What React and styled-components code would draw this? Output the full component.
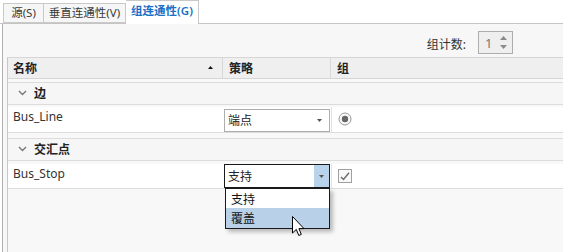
import React from "react";
import styled, { createGlobalStyle } from "styled-components";

const GlobalStyle = createGlobalStyle`
  html, body { margin: 0; padding: 0; background: #fff; }
  body {
    font-family: "Noto Sans", "Noto Sans CJK SC", sans-serif;
    font-size: 12px;
    color: #333;
  }
  * { box-sizing: border-box; }
`;

const Window = styled.div`
  width: 563px;
  height: 252px;
  position: relative;
  overflow: hidden;
  display: flex;
  flex-direction: column;
  background: #fff;
`;

const TabBar = styled.div`
  height: 24px;
  flex: none;
  display: flex;
  align-items: flex-end;
  padding-left: 3px;
  border-bottom: 1px solid #c4c4c4;
`;

const Tab = styled.div`
  width: ${(p) => p.$w}px;
  height: ${(p) => (p.$active ? "24px" : "20px")};
  margin-bottom: ${(p) => (p.$active ? "-1px" : "0")};
  display: flex;
  align-items: center;
  justify-content: center;
  padding-bottom: ${(p) => (p.$active ? "3px" : "0")};
  border: 1px solid #c9c9c9;
  border-left: ${(p) => (p.$first ? "1px solid #c9c9c9" : "none")};
  border-bottom: ${(p) => (p.$active ? "none" : "1px solid #c9c9c9")};
  background: ${(p) => (p.$active ? "#fff" : "#f6f6f6")};
  color: ${(p) => (p.$active ? "#1a70c4" : "#3a3a3a")};
  font-weight: ${(p) => (p.$active ? 600 : 400)};
  font-size: 11.5px;
  white-space: nowrap;
  line-height: 1;
`;

const Panel = styled.div`
  flex: 1;
  margin-left: 2px;
  border-left: 1px solid #b0b0b0;
  background: #f7f7f7;
  padding-left: 4px;
  display: flex;
  flex-direction: column;
`;

const Toolbar = styled.div`
  height: 33px;
  flex: none;
  display: flex;
  justify-content: flex-end;
  align-items: flex-start;
  padding: 7px 50px 0 0;
  gap: 12px;
`;

const CountLabel = styled.span`
  margin-top: 4px;
  color: #333;
`;

const Spinner = styled.div`
  width: 35px;
  height: 23px;
  border: 1px solid #adadad;
  background: #efefef;
  display: flex;
  align-items: center;
  justify-content: space-between;
  padding: 0 5px 0 6px;
  color: #777;
  font-size: 13px;
`;

const SpinArrows = styled.div`
  display: flex;
  flex-direction: column;
  gap: 5px;
`;

const Grid = styled.div`
  flex: 1;
  border-top: 1px solid #d6d6d6;
  border-left: 1px solid #c8c8c8;
  background: #f8f8f8;
  display: flex;
  flex-direction: column;
  position: relative;
`;

const Row = styled.div`
  display: grid;
  grid-template-columns: 215px 108px 1fr;
`;

const HeaderRow = styled(Row)`
  height: 21px;
  background: #efefef;
  border-bottom: 1px solid #d6d6d6;
  color: #222;
  font-weight: 600;
`;

const HeaderCell = styled.div`
  display: flex;
  align-items: center;
  justify-content: space-between;
  padding: 0 9px 1px ${(p) => p.$pl || 5}px;
  border-right: ${(p) => (p.$last ? "none" : "1px solid #d8d8d8")};
`;

const GroupRow = styled.div`
  margin-top: ${(p) => p.$gap}px;
  height: 23px;
  border-top: 1px solid #dcdcdc;
  border-bottom: 1px solid #dcdcdc;
  background: #f6f6f6;
  display: flex;
  align-items: center;
  gap: 7px;
  padding: 0 0 1px 10px;
  font-weight: 600;
  color: #222;
`;

const DataRow = styled(Row)`
  margin-top: ${(p) => p.$gap}px;
  height: ${(p) => p.$h}px;
  background: #fff;
  border-bottom: 1px solid #dcdcdc;
`;

const NameCell = styled.div`
  padding: 1px 0 0 5px;
  color: #333;
`;

const PolicyCell = styled.div`
  padding: ${(p) => p.$pt}px 0 0 1px;
  position: relative;
`;

const ValueCell = styled.div`
  border-left: 1px solid #e2e2e2;
  display: flex;
  align-items: ${(p) => (p.$top ? "flex-start" : "center")};
  padding: ${(p) => (p.$top ? "5px 0 0 6px" : "0 0 2px 6px")};
`;

const Combo = styled.div`
  width: 106px;
  height: ${(p) => (p.$open ? 24 : 23)}px;
  border: 1px solid ${(p) => (p.$open ? "#1a1a1a" : "#adadad")};
  background: #fff;
  display: flex;
  align-items: center;
  color: #222;
`;

const ComboText = styled.span`
  flex: 1;
  padding-left: 3px;
  padding-bottom: 1px;
`;

const ComboButton = styled.div`
  width: 15px;
  align-self: stretch;
  display: flex;
  align-items: center;
  justify-content: center;
  background: ${(p) => (p.$open ? "#b9d3ea" : "transparent")};
  margin-right: ${(p) => (p.$open ? 0 : 2)}px;
`;

const DropList = styled.div`
  position: absolute;
  left: 2px;
  top: 24px;
  width: 105px;
  border: 1px solid #1a1a1a;
  background: #fff;
  box-shadow: 3px 3px 4px rgba(0, 0, 0, 0.25);
  z-index: 2;
`;

const DropItem = styled.div`
  height: ${(p) => (p.$h ? p.$h : 19)}px;
  padding-left: 5px;
  display: flex;
  align-items: center;
  background: ${(p) => (p.$selected ? "#b9d1e8" : "#fff")};
  color: #111;
`;

const Check = styled.div`
  width: 14px;
  height: 14px;
  border: 1px solid #a0a0a0;
  background: #f8f8f8;
  display: flex;
  align-items: center;
  justify-content: center;
`;

const Cursor = styled.svg`
  position: absolute;
  left: 292px;
  top: 216px;
  z-index: 3;
`;

const Tri = ({ up, color = "#666", w = 6, h = 3 }) => (
  <svg width={w} height={h} viewBox={`0 0 ${w} ${h}`}>
    <polygon
      points={up ? `0,${h} ${w},${h} ${w / 2},0` : `0,0 ${w},0 ${w / 2},${h}`}
      fill={color}
    />
  </svg>
);

const Chevron = () => (
  <svg width="9" height="6" viewBox="0 0 9 6">
    <polyline points="1,1 4.5,4.5 8,1" fill="none" stroke="#777" strokeWidth="1.4" />
  </svg>
);

const Radio = () => (
  <svg width="14" height="14" viewBox="0 0 14 14">
    <circle cx="7" cy="7" r="6" fill="#f8f8f8" stroke="#9a9a9a" strokeWidth="1" />
    <circle cx="7" cy="7" r="3.2" fill="#666" />
  </svg>
);

export default function App() {
  return (
    <>
      <GlobalStyle />
      <Window>
        <TabBar>
          <Tab $w={41} $first>源(S)</Tab>
          <Tab $w={82}>垂直连通性(V)</Tab>
          <Tab $w={73} $active>组连通性(G)</Tab>
        </TabBar>
        <Panel>
          <Toolbar>
            <CountLabel>组计数:</CountLabel>
            <Spinner>
              <span>1</span>
              <SpinArrows>
                <Tri up color="#8a8a8a" w={7} h={4} />
                <Tri color="#8a8a8a" w={7} h={4} />
              </SpinArrows>
            </Spinner>
          </Toolbar>
          <Grid>
            <HeaderRow>
              <HeaderCell>
                <span>名称</span>
                <Tri up color="#111" w={5} h={3} />
              </HeaderCell>
              <HeaderCell $pl={6}>策略</HeaderCell>
              <HeaderCell $pl={6} $last>组</HeaderCell>
            </HeaderRow>

            <GroupRow $gap={3}>
              <Chevron />
              <span>边</span>
            </GroupRow>
            <DataRow $gap={2} $h={26}>
              <NameCell>Bus_Line</NameCell>
              <PolicyCell $pt={2}>
                <Combo>
                  <ComboText>端点</ComboText>
                  <ComboButton>
                    <Tri color="#555" w={5} h={3} />
                  </ComboButton>
                </Combo>
              </PolicyCell>
              <ValueCell>
                <Radio />
              </ValueCell>
            </DataRow>

            <GroupRow $gap={5}>
              <Chevron />
              <span>交汇点</span>
            </GroupRow>
            <DataRow $gap={3} $h={25}>
              <NameCell>Bus_Stop</NameCell>
              <PolicyCell $pt={0}>
                <Combo $open>
                  <ComboText>支持</ComboText>
                  <ComboButton $open>
                    <Tri color="#555" w={5} h={3} />
                  </ComboButton>
                </Combo>
                <DropList>
                  <DropItem $h={19}>支持</DropItem>
                  <DropItem $h={20} $selected>覆盖</DropItem>
                </DropList>
              </PolicyCell>
              <ValueCell $top>
                <Check>
                  <svg width="10" height="9" viewBox="0 0 10 9">
                    <polyline
                      points="1,5 3.5,7.5 9,0.8"
                      fill="none"
                      stroke="#6a6a6a"
                      strokeWidth="1.4"
                    />
                  </svg>
                </Check>
              </ValueCell>
            </DataRow>
          </Grid>
        </Panel>
        <Cursor width="13" height="21" viewBox="0 0 13 21">
          <path
            d="M0.5,0.5 L0.5,17 L4.3,13.4 L6.8,19.5 L9.3,18.4 L6.9,12.6 L12,12.6 Z"
            fill="#fff"
            stroke="#000"
            strokeWidth="1"
            strokeLinejoin="miter"
          />
        </Cursor>
      </Window>
    </>
  );
}
